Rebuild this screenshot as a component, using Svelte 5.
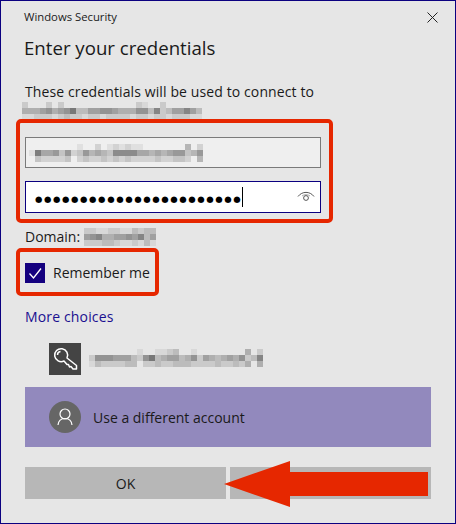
<script>
	// blurred-out account strings, one digit per 6px cell (darkness 0-9)
	const host = [
		'200020200000000000021002000000',
		'444564568335566544466372355753',
		'112221232212212222122122122211'
	];
	const user = [
		'00000000100201212110000000402',
		'18556362364543777755454566346',
		'03222230232232323222232233204'
	];
	const domain = ['221122113233', '567445565735', '222332112131'];
	const account = [
		'00000000100112300100000000402',
		'26665553268345534625434546237',
		'13222233022322333222232232404'
	];
	const dots = '●'.repeat(23);
</script>

{#snippet mosaic(rows)}
	<svg class="mosaic" width={rows[0].length * 6} height={rows.length * 6} aria-hidden="true">
		{#each rows as row, y}
			{#each row.split('') as d, x}
				<rect x={x * 6} y={y * 6} width="6" height="6" fill="#000" fill-opacity={Number(d) * 0.06} />
			{/each}
		{/each}
	</svg>
{/snippet}

<div class="window">
	<div class="titlebar">
		<span>Windows Security</span>
		<svg class="close" width="11" height="11" viewBox="0 0 11 11">
			<path d="M0.5 0.5 L10.5 10.5 M10.5 0.5 L0.5 10.5" stroke="#222" stroke-width="1" fill="none" />
		</svg>
	</div>
	<h1>Enter your credentials</h1>
	<p class="intro">These credentials will be used to connect to</p>
	<div class="host">{@render mosaic(host)}</div>

	<div class="field username">{@render mosaic(user)}</div>
	<div class="field password">
		<span class="dots">{dots}</span>
		<span class="caret"></span>
		<svg class="eye" width="18" height="14" viewBox="0 0 18 14">
			<g fill="none" stroke="#444" stroke-width="0.9">
				<path d="M1 6.5 C5 1 13 1 17 6.5" />
				<path d="M5 6 C7 4.2 11 4.2 13 6" stroke-opacity="0.5" />
				<circle cx="9" cy="8" r="2.4" />
			</g>
		</svg>
	</div>

	<div class="domain">
		<span>Domain:</span>
		{@render mosaic(domain)}
	</div>

	<label class="remember">
		<span class="checkbox">
			<svg width="20" height="20" viewBox="0 0 20 20">
				<path d="M4.5 10.5 L8.5 15 L16 5.5" fill="none" stroke="#fff" stroke-width="1.3" />
			</svg>
		</span>
		Remember me
	</label>

	<div class="more">More choices</div>

	<div class="option saved">
		<span class="tile">
			<svg width="32" height="32" viewBox="0 0 32 32">
				<g fill="none" stroke="#fff" stroke-width="1.5" stroke-linejoin="round">
					<path d="M18 15 L27.5 22.5 L27.5 26 L24 26 L22 23.5 L20.5 24 L19.5 21.5 L18 21.5 L15 18 A6.5 6.5 0 1 1 18 15 Z" />
					<path d="M8.5 12 A3.5 3.5 0 0 1 11.5 8.5" />
				</g>
			</svg>
		</span>
		{@render mosaic(account)}
	</div>

	<div class="option other">
		<span class="avatar">
			<svg width="32" height="32" viewBox="0 0 32 32">
				<g fill="none" stroke="#fff" stroke-width="1.2">
					<circle cx="16" cy="13" r="5" />
					<path d="M9 24 C9.5 19.5 12.5 17.5 16 17.5 C19.5 17.5 22.5 19.5 23 24" />
				</g>
			</svg>
		</span>
		<span class="other-label">Use a different account</span>
	</div>

	<div class="buttons">
		<div class="button">OK</div>
		<div class="button"></div>
	</div>

	<span class="frame frame-fields"></span>
	<span class="frame frame-remember"></span>
	<svg class="arrow" width="456" height="524" viewBox="0 0 456 524">
		<polygon points="224,484 290,461 290,472 428,472 428,496 290,496 290,507" fill="#e62700" />
	</svg>
</div>

<style>
	:global(body) {
		margin: 0;
	}

	.window {
		position: relative;
		box-sizing: border-box;
		width: 456px;
		height: 524px;
		padding: 0 24px;
		border: 1px solid #0b0080;
		background: #e6e6e6;
		color: #1a1a1a;
		font-family: 'Open Sans', 'Noto Sans', sans-serif;
		font-size: 14px;
		line-height: 20px;
	}

	.mosaic {
		display: block;
		flex: none;
	}

	.titlebar {
		display: flex;
		justify-content: space-between;
		align-items: center;
		height: 16px;
		margin: 0 -7px 0 -1px;
		padding-top: 8px;
		font-size: 11.3px;
		line-height: 16px;
	}

	h1 {
		height: 28px;
		margin: 9px 0 0 -1px;
		font-size: 18.65px;
		font-weight: 400;
		line-height: 28px;
	}

	.intro {
		margin: 20px 0 0;
		height: 19px;
		letter-spacing: 0.11px;
	}

	.host {
		margin: 1px 0 0 -3px;
	}

	.field {
		box-sizing: border-box;
		display: flex;
		align-items: center;
		position: relative;
		width: 296px;
	}

	.username {
		height: 31px;
		margin-top: 17px;
		padding-left: 3px;
		border: 1px solid #7a7a7a;
		background: #efefef;
	}

	.password {
		height: 32px;
		margin-top: 13px;
		padding-left: 9px;
		border: 1px solid #0b0080;
		background: #fff;
	}

	.dots {
		padding-top: 3px;
		font-family: 'DejaVu Sans', sans-serif;
		font-size: 8.5px;
		letter-spacing: 1.6px;
		color: #000;
		white-space: nowrap;
	}

	.caret {
		width: 1px;
		height: 20px;
		background: #000;
	}

	.eye {
		margin-left: auto;
		margin-right: 5px;
	}

	.domain {
		display: flex;
		align-items: center;
		gap: 4px;
		height: 18px;
		margin-top: 15px;
	}

	.remember {
		display: flex;
		align-items: center;
		gap: 8px;
		height: 20px;
		margin-top: 17px;
	}

	.checkbox {
		width: 20px;
		height: 20px;
		background: #14007f;
	}

	.checkbox svg,
	.tile svg,
	.avatar svg {
		display: block;
	}

	.more {
		height: 20px;
		margin-top: 24px;
		color: #1a0f90;
		letter-spacing: 0.15px;
	}

	.option {
		display: flex;
		padding-left: 24px;
	}

	.saved {
		gap: 8px;
		height: 32px;
		margin-top: 16px;
	}

	.saved .mosaic {
		margin-top: 6px;
	}

	.tile {
		width: 32px;
		height: 32px;
		background: #444;
	}

	.other {
		align-items: center;
		gap: 12px;
		height: 60px;
		margin-top: 12px;
		background: #9289bd;
	}

	.other-label {
		padding-top: 2px;
	}

	.avatar {
		width: 32px;
		height: 32px;
		border-radius: 50%;
		background: #666;
	}

	.buttons {
		display: grid;
		grid-template-columns: 1fr 1fr;
		gap: 4px;
		margin-top: 20px;
	}

	.button {
		height: 32px;
		background: #b7b7b7;
		text-align: center;
		line-height: 34px;
	}

	/* annotations drawn over the dialog */
	.frame {
		position: absolute;
		box-sizing: border-box;
		border: 4px solid #e62700;
		border-radius: 5px;
	}

	.frame-fields {
		left: 15px;
		top: 118px;
		width: 317px;
		height: 104px;
	}

	.frame-remember {
		left: 15px;
		top: 247px;
		width: 143px;
		height: 48px;
	}

	.arrow {
		position: absolute;
		left: -1px;
		top: -1px;
		pointer-events: none;
	}
</style>
